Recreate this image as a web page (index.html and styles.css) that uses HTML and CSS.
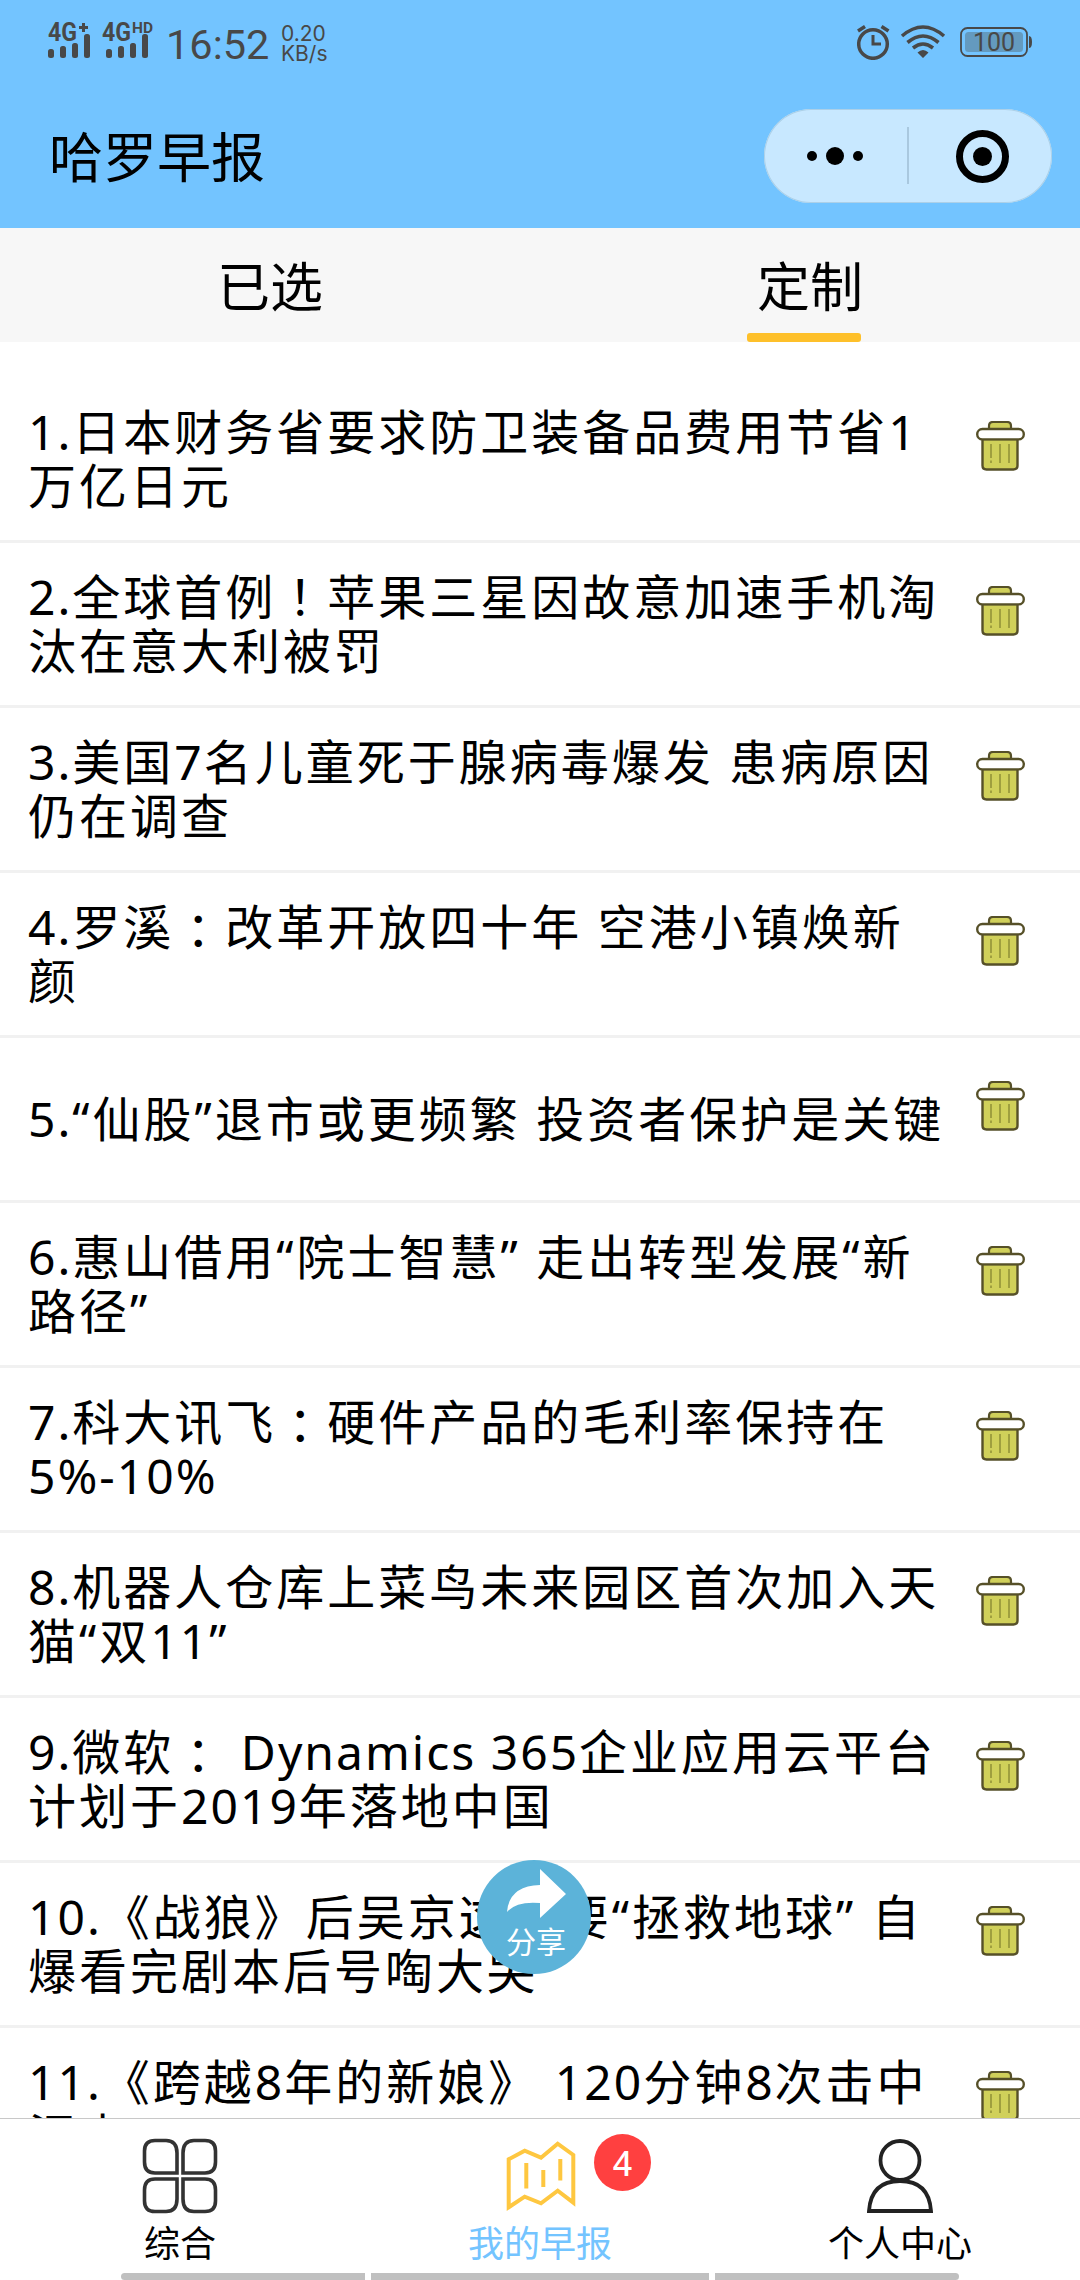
FILE: index.html
```html
<!DOCTYPE html>
<html lang="zh-CN">
<head>
<meta charset="utf-8">
<title>哈罗早报</title>
<link rel="stylesheet" href="styles.css">
</head>
<body>
<svg class="defs" width="0" height="0">
  <symbol id="trash" viewBox="0 0 49 50">
    <path d="M13 8V5q0-4 4-4h14q4 0 4 4v3" fill="#d0d05a" stroke="#565028" stroke-width="2.2"/>
    <path d="M6.500 18v26.500q0 4 4 4h27q4 0 4-4V18z" fill="#d0d05a" stroke="#565028" stroke-width="2.4"/>
    <rect x="1.200" y="8" width="46.600" height="10.400" rx="5.200" fill="#fff" stroke="#565028" stroke-width="2.400"/>
    <path d="M15 23v14M15 39.500v2.500M24 23v19M33 23v19" stroke="#9a9a3c" stroke-width="1.800" fill="none"/>
  </symbol>
</svg>
<div class="screen">
  <header class="header">
    <div class="status">
      <svg class="signals" width="108" height="37" viewBox="0 0 108 37" fill="#484848">
        <text class="net" x="0" y="18" textLength="29" lengthAdjust="spacingAndGlyphs">4G</text>
        <path d="M31 4.500h9M35.500 0v9" stroke="#484848" stroke-width="3"/>
        <rect x="0" y="26" width="6" height="9" rx="2.500"/><rect x="12" y="23" width="6" height="12" rx="2.500"/><rect x="24" y="20" width="6" height="15" rx="2.500"/><rect x="36" y="11" width="6" height="24" rx="2.500"/>
        <text class="net" x="54" y="18" textLength="29" lengthAdjust="spacingAndGlyphs">4G</text>
        <text class="hd" x="84" y="10" textLength="21" lengthAdjust="spacingAndGlyphs">HD</text>
        <rect x="58" y="26" width="6" height="9" rx="2.500"/><rect x="70" y="23" width="6" height="12" rx="2.500"/><rect x="82" y="20" width="6" height="15" rx="2.500"/><rect x="94" y="11" width="6" height="24" rx="2.500"/>
      </svg>
      <span class="clock">16:52</span>
      <span class="speed">0.20<br>KB/s</span>
      <svg class="sysicons" width="176" height="36" viewBox="0 0 176 36">
        <g fill="none" stroke="#484848">
          <circle cx="16" cy="20" r="14.300" stroke-width="3.500"/>
          <path d="M16 11v9h8" stroke-width="3"/>
          <path d="M1 7l7-4.500M24.500 2.500l7 4.500" stroke-width="3.500"/>
          <path d="M45 12q21-18 42 0M50.500 18.500q15.500-13 31 0M56 24q10-8 20 0" stroke-width="3.600"/>
          <rect x="104" y="4" width="66" height="28" rx="6.500" stroke-width="1.800"/>
        </g>
        <path d="M60.500 28.500q5.500-5 11 0L66 34zM172 12q3 0 3 6t-3 6z" fill="#484848"/>
        <rect x="108" y="8" width="58" height="20" rx="3.500" fill="#649abf"/>
        <text class="batt" x="137" y="27" text-anchor="middle">100</text>
      </svg>
    </div>
    <div class="nav">
      <h1 class="title">哈罗早报</h1>
      <div class="capsule">
        <svg width="288" height="94" viewBox="0 0 288 94">
          <circle cx="48" cy="47" r="5"/><circle cx="71" cy="47" r="9"/><circle cx="94" cy="47" r="5"/>
          <path d="M144 18v57" stroke="#a9c8df" stroke-width="2"/>
          <circle cx="218.500" cy="47.500" r="23" fill="none" stroke="#000" stroke-width="7"/><circle cx="218.500" cy="47.500" r="9.500"/>
        </svg>
      </div>
    </div>
  </header>
  <nav class="tabs">
    <div class="tab">已选</div>
    <div class="tab active">定制</div>
  </nav>
  <main class="list">
    <div class="row"><p><span class="lat">1.</span>日本财务省要求防卫装备品费用节省1<br>万亿日元</p><svg class="trash"><use href="#trash"/></svg></div>
    <div class="row"><p><span class="lat">2.</span>全球首例<span class="mid" lang="zh-TW">！</span>苹果三星因故意加速手机淘<br>汰在意大利被罚</p><svg class="trash"><use href="#trash"/></svg></div>
    <div class="row"><p><span class="lat">3.</span>美国<span class="lat">7</span>名儿童死于腺病毒爆发 患病原因<br>仍在调查</p><svg class="trash"><use href="#trash"/></svg></div>
    <div class="row"><p><span class="lat">4.</span>罗溪<span class="mid colon" lang="zh-TW">：</span>改革开放四十年 空港小镇焕新<br>颜</p><svg class="trash"><use href="#trash"/></svg></div>
    <div class="row"><p><span class="lat">5.</span>“仙股”退市或更频繁 投资者保护是关键</p><svg class="trash"><use href="#trash"/></svg></div>
    <div class="row"><p><span class="lat">6.</span>惠山借用“院士智慧” 走出转型发展“新<br>路径”</p><svg class="trash"><use href="#trash"/></svg></div>
    <div class="row"><p><span class="lat">7.</span>科大讯飞<span class="mid colon" lang="zh-TW">：</span>硬件产品的毛利率保持在<br><span class="lat">5%-10%</span></p><svg class="trash"><use href="#trash"/></svg></div>
    <div class="row"><p><span class="lat">8.</span>机器人仓库上菜鸟未来园区首次加入天<br>猫“双<span class="lat">11</span>”</p><svg class="trash"><use href="#trash"/></svg></div>
    <div class="row"><p><span class="lat">9.</span>微软<span class="mid colon" lang="zh-TW">：</span> <span class="lat">Dynamics 365</span>企业应用云平台<br>计划于<span class="lat">2019</span>年落地中国</p><svg class="trash"><use href="#trash"/></svg></div>
    <div class="row"><p><span class="lat">10.</span>《战狼》后吴京这次要“拯救地球” 自<br>爆看完剧本后号啕大哭</p><svg class="trash"><use href="#trash"/></svg></div>
    <div class="row"><p><span class="lat">11.</span>《跨越<span class="lat">8</span>年的新娘》 <span class="lat">120</span>分钟<span class="lat">8</span>次击中<br>泪点</p><svg class="trash"><use href="#trash"/></svg></div>
  </main>
  <footer class="tabbar">
    <div class="item">
      <svg width="76" height="76" viewBox="0 0 76 76" fill="none" stroke="#333" stroke-width="3.600">
        <path d="M35 35V15Q35 2.500 24 2.500H13Q2.500 2.500 2.500 13V24Q2.500 35 13 35zM41 35V15Q41 2.500 52 2.500H63Q73.500 2.500 73.500 13V24Q73.500 35 63 35zM35 41V61Q35 73.500 24 73.500H13Q2.500 73.500 2.500 63V52Q2.500 41 13 41zM41 41V61Q41 73.500 52 73.500H63Q73.500 73.500 73.500 63V52Q73.500 41 63 41z"/>
      </svg>
      <span>综合</span>
    </div>
    <div class="item current">
      <svg width="76" height="76" viewBox="0 0 76 76" fill="none" stroke="#fec740" stroke-width="4">
        <path d="M6.700 21.300l16-8.600 16.300 7 16.700-14L71.300 17v47.700l-15.600-12L39 65.300l-16.300-6.600-16 10.600z"/><path d="M24.300 25v25.500M41.300 32v17M58.300 21v21.500"/>
      </svg>
      <span>我的早报</span>
      <b class="badge">4</b>
    </div>
    <div class="item">
      <svg width="76" height="76" viewBox="0 0 76 76" fill="none" stroke="#222" stroke-width="3.800">
        <circle cx="38" cy="22.500" r="19.500"/><path d="M7 73Q9 43 38 43T69 73z"/>
      </svg>
      <span>个人中心</span>
    </div>
    <div class="homebars"><i></i><i class="wide"></i><i></i></div>
  </footer>
  <div class="share">
    <svg width="60" height="51" viewBox="0 0 60 51"><path d="M34 1l26 25-26 24V35Q10 33 1 44Q3 18 34 17z" fill="#fff"/></svg>
    <span>分享</span>
  </div>
</div>
</body>
</html>
```
FILE: styles.css
```css
* { box-sizing: border-box; }
body { margin: 0; background: #fff; color: #000; font-family: "Noto Sans", "Noto Sans CJK SC", sans-serif; }
svg { display: block; flex: none; }
.defs { position: absolute; }
.screen { position: relative; width: 1080px; height: 2280px; overflow: hidden; display: flex; flex-direction: column; }
.header { height: 228px; flex: none; background: #73c4ff; }
.status { height: 84px; padding: 23px 47px 0 48px; display: flex; align-items: flex-start; color: #484848; font-family: Inter, sans-serif; }
.signals { overflow: visible; }
.net { font: 700 25px Roboto, sans-serif; }
.hd { font: 700 14px Roboto, sans-serif; }
.batt { font: 400 25px Roboto, sans-serif; fill: #484848; }
.clock { width: 103px; margin-left: 10px; font-size: 41.5px; line-height: 44px; font-family: Roboto, sans-serif; }
.speed { margin-left: 12px; font-size: 21px; line-height: 20px; padding-top: 1px; }
.sysicons { margin-left: auto; margin-top: 1px; }
.nav { height: 144px; padding: 25px 28px 0 49px; display: flex; justify-content: space-between; align-items: flex-start; }
.title { margin: 0; font-size: 54px; line-height: 96px; font-weight: 400; }
.capsule { width: 288px; height: 94px; border-radius: 47px; background: #c8e8ff; box-shadow: inset 0 0 0 1px #acd0e8; }
.tabs { height: 114px; flex: none; display: flex; background: #f7f7f7; }
.tab { flex: 1; text-align: center; font-size: 53px; line-height: 118px; position: relative; }
.active::after { content: ""; position: absolute; left: 207px; bottom: 0; width: 114px; height: 9px; border-radius: 3px; background: #fec02a; }
.list { flex: 1; min-height: 0; overflow: hidden; padding-top: 36px; }
.row { height: 165px; border-bottom: 3px solid #f1f1f1; padding: 0 55px 0 28px; display: flex; align-items: center; justify-content: space-between; }
.row p { margin: 0; font-size: 48px; line-height: 54px; letter-spacing: 3px; white-space: nowrap; }
.lat { letter-spacing: 2px; }
.mid { font-family: "Noto Sans CJK TC", sans-serif; line-height: 1; }
.colon { vertical-align: -4px; line-height: 0; }
.trash { width: 49px; height: 50px; align-self: flex-start; margin-top: 43px; }
.tabbar { position: relative; height: 162px; flex: none; display: flex; border-top: 1px solid #c8c8c8; background: #fff; }
.item { flex: 1; position: relative; display: flex; flex-direction: column; align-items: center; padding-top: 19px; font-size: 36px; }
.item span { line-height: 54px; margin-top: 3px; }
.current { color: #73c4ff; }
.badge { position: absolute; left: 234px; top: 15px; width: 57px; height: 57px; border-radius: 50%; background: #ff4040; color: #fff; font-size: 34px; font-weight: 500; line-height: 59px; text-align: center; }
.homebars { position: absolute; left: 121px; bottom: 0; width: 838px; height: 7px; display: flex; gap: 6px; border-radius: 4px; overflow: hidden; }
.homebars i { width: 244px; background: #c0c0c0; }
.homebars .wide { flex: 1; }
.share { position: absolute; left: 477px; top: 1860px; width: 114px; height: 114px; border-radius: 50%; background: #5cb3d9; color: #fff; display: flex; flex-direction: column; align-items: center; padding-top: 8px; font-size: 30px; }
.share svg { margin-left: 4px; }
.share span { line-height: 44px; margin: 1px 0 0 4px; }
```
